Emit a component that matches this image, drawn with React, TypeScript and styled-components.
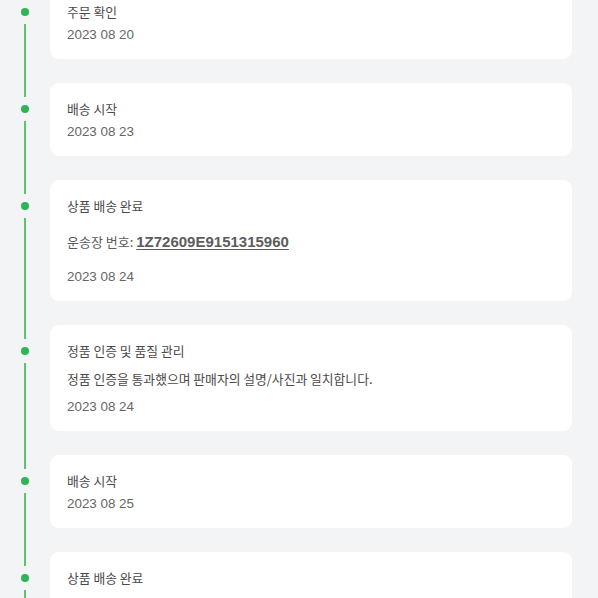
import React from 'react';
import styled, { createGlobalStyle } from 'styled-components';

type Step = {
  title: string;
  date: string;
  tracking?: string;
  note?: string;
};

const steps: Step[] = [
  { title: '주문 확인', date: '2023 08 20' },
  { title: '배송 시작', date: '2023 08 23' },
  { title: '상품 배송 완료', date: '2023 08 24', tracking: '1Z72609E9151315960' },
  {
    title: '정품 인증 및 품질 관리',
    date: '2023 08 24',
    note: '정품 인증을 통과했으며 판매자의 설명/사진과 일치합니다.',
  },
  { title: '배송 시작', date: '2023 08 25' },
  { title: '상품 배송 완료', date: '2023 08 26', tracking: '1Z72609E9151315960' },
];

const App: React.FC = () => {
  return (
    <>
      <GlobalStyle />
      <Page>
        <Timeline>
          {steps.map((step, idx) => (
            <Row key={idx}>
              <Rail>
                <Segment $top />
                <Dot />
                <Segment />
              </Rail>
              <Card $gap={step.tracking ? 'wide' : step.note ? 'mid' : 'tight'}>
                <Title>{step.title}</Title>
                {step.tracking && (
                  <Tracking>
                    운송장 번호: <TrackingNo>{step.tracking}</TrackingNo>
                  </Tracking>
                )}
                {step.note && <Note>{step.note}</Note>}
                <DateText>{step.date}</DateText>
              </Card>
            </Row>
          ))}
        </Timeline>
      </Page>
    </>
  );
};

export default App;

const GlobalStyle = createGlobalStyle`
  html, body {
    margin: 0;
    padding: 0;
    background: #f2f4f6;
    overflow: hidden;
  }
  body {
    font-family: "Noto Sans CJK KR", "Noto Sans", sans-serif;
  }
`;

const Page = styled.div`
  width: 598px;
  height: 598px;
  overflow: hidden;
  background: #f2f4f6;
`;

const Timeline = styled.div`
  display: flex;
  flex-direction: column;
  margin-top: -14px;
  padding-right: 26px;
`;

const Row = styled.div`
  display: grid;
  grid-template-columns: 50px 1fr;
`;

const Rail = styled.div`
  display: flex;
  flex-direction: column;
  align-items: center;
`;

const Segment = styled.div<{ $top?: boolean }>`
  width: 2px;
  background: #5ac56f;
  ${({ $top }) => ($top ? 'height: 14px; margin-bottom: 8px;' : 'flex: 1; margin-top: 8px;')}
`;

const Dot = styled.div`
  width: 8px;
  height: 8px;
  border-radius: 50%;
  background: #2fb457;
  flex-shrink: 0;
`;

const gapMap = { tight: '5px', mid: '10px', wide: '17px' };

const Card = styled.div<{ $gap: 'tight' | 'mid' | 'wide' }>`
  background: #ffffff;
  border-radius: 9px;
  padding: 17px 17px 15px;
  margin-bottom: 24px;
  display: flex;
  flex-direction: column;
  gap: ${({ $gap }) => gapMap[$gap]};
`;

const Title = styled.div`
  font-size: 12.8px;
  line-height: 18px;
  color: #4a4a4a;
`;

const Tracking = styled.div`
  font-size: 13px;
  line-height: 20px;
  color: #5a5a5a;
  margin-bottom: -1px;
`;

const TrackingNo = styled.span`
  font-family: "Liberation Sans", Arial, sans-serif;
  font-weight: 700;
  font-size: 15px;
  color: #5c5c5c;
  text-decoration: underline;
  text-underline-offset: 2px;
`;

const Note = styled.div`
  font-size: 12.8px;
  line-height: 18px;
  color: #4a4a4a;
`;

const DateText = styled.div`
  font-family: "Liberation Sans", Arial, sans-serif;
  font-size: 13.4px;
  line-height: 18px;
  color: #666666;
`;
